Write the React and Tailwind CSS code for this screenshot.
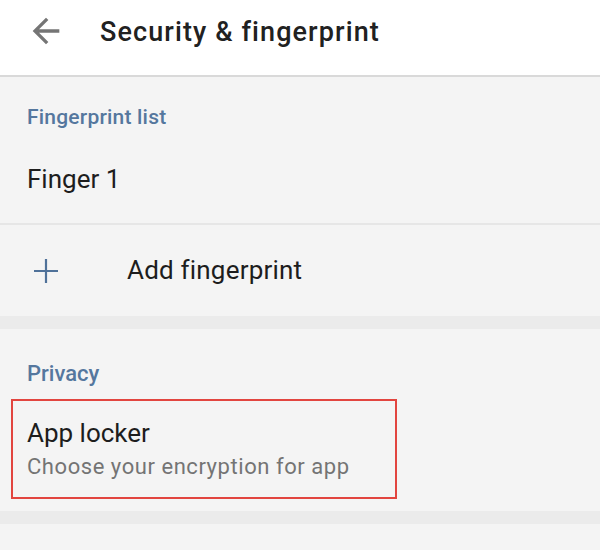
import React from 'react';

const font = { fontFamily: 'Roboto, "Noto Sans", sans-serif' };

const BackArrow = () => (
  <svg width="40" height="40" viewBox="0 0 24 24" className="text-[#757575]">
    <path fill="currentColor" d="M20 11H7.83l5.59-5.59L12 4l-8 8 8 8 1.41-1.41L7.83 13H20v-2z" />
  </svg>
);

const Plus = () => (
  <svg width="24" height="24" viewBox="0 0 24 24">
    <path d="M12 0v24M0 12h24" stroke="#4f7199" strokeWidth="2.2" fill="none" />
  </svg>
);

const App = () => {
  return (
    <div className="w-[600px] h-[550px] bg-[#f4f4f4] overflow-hidden" style={font}>
      {/* Header */}
      <div className="h-[77px] bg-white border-b-2 border-[#d9d9d9] flex items-center">
        <div className="ml-[26px] mt-[-14px]">
          <BackArrow />
        </div>
        <h1 className="ml-[34px] mt-[-12px] text-[27px] leading-[34px] tracking-[1.1px] font-medium text-[#212121]">
          Security &amp; fingerprint
        </h1>
      </div>

      {/* Fingerprint list */}
      <div className="pt-[24px]">
        <div className="h-[34px] flex items-center px-[27px] text-[21px] tracking-[0.2px] font-medium text-[#55779e]">
          Fingerprint list
        </div>
        <div className="h-[88px] flex items-center px-[27px] text-[26px] text-[#1d1d1d]">Finger 1</div>
        <div className="h-[2px] bg-[#e6e6e6]" />
        <div className="h-[91px] flex items-center">
          <div className="ml-[34px] w-[24px] flex">
            <Plus />
          </div>
          <span className="ml-[69px] text-[26px] tracking-[0.2px] text-[#1d1d1d]">Add fingerprint</span>
        </div>
      </div>

      <div className="h-[13px] bg-[#ebebeb]" />

      {/* Privacy */}
      <div className="pt-[27px] pb-[12px]">
        <div className="h-[34px] flex items-center px-[27px] text-[22px] font-medium text-[#55779e]">
          Privacy
        </div>
        <div className="mt-[9px] ml-[11px] w-[386px] h-[100px] border-2 border-[#e2453f] pl-[14px] pt-[17px]">
          <div className="text-[26px] leading-[30px] text-[#1d1d1d]">App locker</div>
          <div className="mt-[5px] text-[22px] leading-[28px] tracking-[0.55px] text-[#747474]">
            Choose your encryption for app
          </div>
        </div>
      </div>

      <div className="h-[13px] bg-[#ebebeb]" />
    </div>
  );
};

export default App;
